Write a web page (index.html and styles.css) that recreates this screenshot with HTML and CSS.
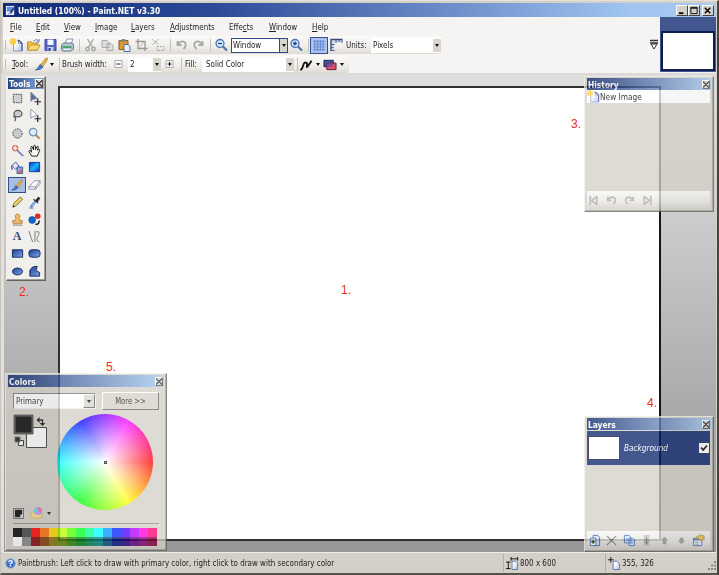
FILE: index.html
```html
<!DOCTYPE html>
<html lang="en">
<head>
<meta charset="utf-8">
<title>Untitled (100%) - Paint.NET v3.30</title>
<link rel="stylesheet" href="styles.css">
</head>
<body>
<svg class="defs" aria-hidden="true">
  <defs>
    <linearGradient id="blue" x1="0" y1="0" x2="1" y2="1"><stop offset="0" stop-color="#1c3f91"/><stop offset="1" stop-color="#7fa8e8"/></linearGradient>
    <linearGradient id="cy" x1="0" y1="0" x2="1" y2="1"><stop offset="0" stop-color="#0a2ed0"/><stop offset=".5" stop-color="#18b8f8"/><stop offset="1" stop-color="#0630c0"/></linearGradient>
    <linearGradient id="sheet" x1="0" y1="0" x2="1" y2="1"><stop offset=".3" stop-color="#fff"/><stop offset="1" stop-color="#a9c1ee"/></linearGradient>
  </defs>
  <symbol id="new" viewBox="0 0 14 14"><path d="M4 2.500h5l3 3v7.500H4z" fill="url(#sheet)"/><path d="M4 6v7h8.500M9 2.500v3h3" fill="none" stroke="#8c9cc6"/><path d="M8 2.500h1.500l3 3V13" fill="none" stroke="#3d5290" stroke-width="1.300"/><path d="M3.500 0v7M0 3.500h7M1 1l5 5M6 1L1 6" stroke="#f5b81c" stroke-width="1.300"/><circle cx="3.500" cy="3.500" r="2.200" fill="#ffd23c"/></symbol>
  <symbol id="open" viewBox="0 0 14 14"><path d="M1 12V4h4l1 1h5v7z" fill="#f3c34f" stroke="#b98b2e"/><path d="M1 12l3-5h9.500l-2.500 5z" fill="#ffdc78" stroke="#c59431"/><path d="M7 3q3-3 5 0M12.500 1v3H10" fill="none" stroke="#5c7fb8"/></symbol>
  <symbol id="save" viewBox="0 0 14 14"><path d="M1.500 1.500h11v11h-11z" fill="#5267c8" stroke="#3a48a6"/><path d="M4 1.500h6v5.500H4z" fill="#f1f5ff"/><path d="M4 9h6v4H4z" fill="#c6cee8"/><path d="M5 10h2v3H5z" fill="#29388e"/></symbol>
  <symbol id="print" viewBox="0 0 14 14"><path d="M4.500 6l2-5h6l-2 5z" fill="#fff" stroke="#8295b4"/><path d="M1 7l2-2h9l1 2v4l-2 2H2l-1-2z" fill="#b9c4d3" stroke="#6c7c93"/><path d="M2 8h9v2.500H2z" fill="#45a868"/><path d="M3 10.500h7V12H3z" fill="#eef"/></symbol>
  <symbol id="cut" viewBox="0 0 14 14"><g fill="none" stroke="#a5a5a5" stroke-width="1.400"><path d="M4 1l5 8M10 1L5 9"/><circle cx="4" cy="11" r="1.700"/><circle cx="10" cy="11" r="1.700"/></g></symbol>
  <symbol id="copyg" viewBox="0 0 14 14"><g fill="#dedede" stroke="#aaa"><path d="M1.500 2.500h5l2 2v5h-7zM6.500 5.500h4l2 2v5h-6z"/></g></symbol>
  <symbol id="copy" viewBox="0 0 14 14"><g fill="#d9e7ff" stroke="#3d6ab4"><path d="M1.500 1.500h5l2 2v6h-7zM6.500 4.500h4l2 2v6h-6z"/></g><path d="M3 5h3M3 7h3M8 8h3M8 10h3" stroke="#6f9ad8"/></symbol>
  <symbol id="paste" viewBox="0 0 14 14"><path d="M1.500 2.500h9v9h-9z" fill="#dc9a34" stroke="#8a5b1c"/><path d="M4 1h4v3H4z" fill="#888"/><path d="M6.500 6.500h4l2 2v5h-6z" fill="#eaf1ff" stroke="#5470a6"/></symbol>
  <symbol id="crop" viewBox="0 0 14 14"><path d="M3.500 1v9.500H13M1 3.500h9.500V13" fill="none" stroke="#999" stroke-width="1.300"/><path d="M4 10l6-6" stroke="#bbb"/></symbol>
  <symbol id="desel" viewBox="0 0 14 14"><path d="M1 1l6 6M7 1L1 7" stroke="#aaa"/><path d="M5.500 8.500h7v4h-7z" fill="none" stroke="#a5a5a5" stroke-dasharray="2 1"/></symbol>
  <symbol id="undo" viewBox="0 0 14 14"><path d="M3 3v4h4M3 7q3-5 7-3 3 3-1 7" fill="none" stroke="#aaa" stroke-width="1.800"/></symbol>
  <symbol id="redo" viewBox="0 0 14 14"><path d="M11 3v4H7M11 7Q8 2 4 4 1 7 5 11" fill="none" stroke="#aaa" stroke-width="1.800"/></symbol>
  <symbol id="zout" viewBox="0 0 14 14"><path d="M8 8l4.500 4.500" stroke="#55709e" stroke-width="2.200"/><circle cx="5.500" cy="5.500" r="4" fill="#d9eaff" stroke="#4a74b5" stroke-width="1.300"/><path d="M3.500 5.500h4" stroke="#223f86" stroke-width="1.300"/></symbol>
  <symbol id="zin" viewBox="0 0 14 14"><path d="M8 8l4.500 4.500" stroke="#55709e" stroke-width="2.200"/><circle cx="5.500" cy="5.500" r="4" fill="#d9eaff" stroke="#4a74b5" stroke-width="1.300"/><path d="M3.500 5.500h4M5.500 3.500v4" stroke="#223f86" stroke-width="1.300"/></symbol>
  <symbol id="mag" viewBox="0 0 14 14"><path d="M8 8l4.500 4.500" stroke="#c48a3a" stroke-width="2.200"/><circle cx="5.500" cy="5.500" r="4" fill="#d9eeff" stroke="#7090b8" stroke-width="1.300"/></symbol>
  <symbol id="gridi" viewBox="0 0 14 14"><path d="M2.500 1v12M5.500 1v12M8.500 1v12M11.500 1v12M1 2.500h12M1 5.500h12M1 8.500h12M1 11.500h12" stroke="#6588d0"/></symbol>
  <symbol id="ruler" viewBox="0 0 14 14"><path d="M1.500 13V1.500H13v3H4.500V13z" fill="#cfdcf4"/><path d="M1.500 13V1.500H13" fill="none" stroke="#3b4c70" stroke-width="1.400"/><path d="M6.500 2v3M9.500 2v2M12.500 2v3M2 6.500h3M2 9.500h2M2 12.500h3" fill="none" stroke="#48608e"/></symbol>
  <symbol id="brush" viewBox="0 0 14 14"><path d="M6 8L11 1.500l2-.5-.5 2.500L8 10z" fill="#f1b843" stroke="#a87420" stroke-width=".7"/><path d="M5.500 7.500l3 2.500q-2 3-7.500 3 3-1.500 4.500-5.500z" fill="#4c7ad4" stroke="#234792" stroke-width=".7"/></symbol>
  <symbol id="minus" viewBox="0 0 14 14"><path d="M3.500 3.500h7v7h-7z" fill="#fff" stroke="#aaa"/><path d="M5 7h4" stroke="#222"/></symbol>
  <symbol id="plus" viewBox="0 0 14 14"><path d="M3.500 3.500h7v7h-7z" fill="#fff" stroke="#aaa"/><path d="M5 7h4M7 5v4" stroke="#111"/></symbol>
  <symbol id="curve" viewBox="0 0 14 14"><path d="M1 13q2-1 3-5t3-3 1 4 5-6" fill="none" stroke="#111" stroke-width="2"/></symbol>
  <symbol id="blend" viewBox="0 0 14 14"><path d="M.5 2.500h10v7H.5z" fill="#3d58a8" stroke="#111a52"/><path d="M3.500 5.500h10v7h-10z" fill="#e0506a" stroke="#5d1735"/><path d="M4 6h6v3.500H4z" fill="#7551a0"/></symbol>
  <symbol id="rsel" viewBox="0 0 14 14"><path d="M2.500 2.500h9v9h-9z" fill="#d0d0d0" stroke="#333" stroke-dasharray="1.500 1"/></symbol>
  <symbol id="move" viewBox="0 0 14 14"><path d="M3 0v10l2.500-2L10 7z" fill="#5d6f93" stroke="#7c89a3" stroke-width=".8"/><path d="M10.500 7v7M7 10.500h7" stroke="#222" stroke-width="1.300"/></symbol>
  <symbol id="movesel" viewBox="0 0 14 14"><path d="M3 0v10l2.500-2L10 7z" fill="#fff" stroke="#8594b0"/><path d="M10.500 7v7M7 10.500h7" stroke="#222" stroke-width="1.300"/></symbol>
  <symbol id="lasso" viewBox="0 0 14 14"><ellipse cx="7.500" cy="5" rx="4.300" ry="3.500" fill="#ccc" stroke="#555" stroke-width="1.300"/><path d="M4 7q-2 1 0 2t0 4" fill="none" stroke="#555" stroke-width="1.300"/></symbol>
  <symbol id="esel" viewBox="0 0 14 14"><circle cx="7" cy="7" r="5" fill="#c9c9c9" stroke="#333" stroke-dasharray="1.500 1"/></symbol>
  <symbol id="wand" viewBox="0 0 14 14"><path d="M6 6l7 7" stroke="#7389c0" stroke-width="2"/><circle cx="4.500" cy="4.500" r="3" fill="#f3a08c" stroke="#cc5a50"/><path d="M4.500 2v5M2 4.500h5" stroke="#fff"/></symbol>
  <symbol id="hand" viewBox="0 0 14 14"><path d="M4 13L1 8q0-2 2-.5L4 9 3 4q0-2 1.500-1L6 6.500V2q1.500-1.500 2 0v4l1.500-3q2-1 1.500 1l-1 3 1.500-1.500q1.500 0 1 1.500l-2.500 6z" fill="#fff" stroke="#111"/></symbol>
  <symbol id="bucket" viewBox="0 0 14 14"><path d="M1 5l4-4 4 5-4 3z" fill="#dce7f7" stroke="#3d598e"/><path d="M1 5q-1 4 1 4" fill="none" stroke="#3560ba" stroke-width="1.500"/><path d="M6.500 6.500h6v7h-6z" fill="#8caae3" stroke="#395b9e"/><path d="M7 13l5-6v6z" fill="#e4635f"/></symbol>
  <symbol id="grad" viewBox="0 0 14 14"><path d="M1.500 1.500h11v10h-11z" fill="url(#cy)" stroke="#1432a0"/></symbol>
  <symbol id="eraser" viewBox="0 0 14 14"><path d="M1 9.500L7 3h6L8 9.500zM1 9.500V12h7V9.500M8 12l5-6V3" fill="#fff" stroke="#7e8ca6"/></symbol>
  <symbol id="pencil" viewBox="0 0 14 14"><path d="M2 12l1-4 7-7 2.500 2.500-7 7z" fill="#e7d16a" stroke="#826a27"/><path d="M2 12l.5-2 1.500 1.500z" fill="#111"/></symbol>
  <symbol id="picker" viewBox="0 0 14 14"><path d="M3 12l5-6" stroke="#4f80c8" stroke-width="2.600"/><path d="M4 11l4-5" stroke="#cfe4ff"/><path d="M1 13h5" stroke="#4f80c8"/><path d="M6 3.500l5 4M8.500 5l2.500-3.500 1.500 1L10 6z" fill="#222a3c" stroke="#222a3c" stroke-width="1.200"/></symbol>
  <symbol id="stamp" viewBox="0 0 14 14"><path d="M5.500 6Q3 2 7 1q4 1 1.500 5l1 2H12v3H2V8h2.500z" fill="#f0bd68" stroke="#b07c38"/><path d="M2 13h10" stroke="#8b7350"/></symbol>
  <symbol id="recolor" viewBox="0 0 14 14"><circle cx="4.500" cy="7.500" r="3.700" fill="#1765d2" stroke="#123f8c" stroke-width=".6"/><circle cx="10.500" cy="3.500" r="3" fill="#e12a21"/><path d="M8 12q4 1 4-4" fill="none" stroke="#111" stroke-width="1.500"/></symbol>
  <symbol id="lines" viewBox="0 0 14 14"><path d="M1 1l4 12M7.500 1v12M9 2q5-1 2 4t1 7" fill="none" stroke="#777"/></symbol>
  <symbol id="rect" viewBox="0 0 14 14"><path d="M1.500 3h11v8h-11z" fill="url(#blue)" stroke="#13285d"/></symbol>
  <symbol id="rrect" viewBox="0 0 14 14"><rect x="1" y="3" width="12" height="8" rx="3" fill="url(#blue)" stroke="#13285d"/></symbol>
  <symbol id="ell" viewBox="0 0 14 14"><ellipse cx="7" cy="7" rx="5.500" ry="3.700" fill="url(#blue)" stroke="#13285d"/></symbol>
  <symbol id="free" viewBox="0 0 14 14"><path d="M2 12V6q2-5 8-4.500L8.500 6l4 2v4z" fill="url(#blue)" stroke="#13285d"/></symbol>
  <symbol id="first" viewBox="0 0 14 14"><path d="M3.500 2v10M10.500 2v10M10 3L5 7l5 4" fill="none" stroke="#aaa" stroke-width="1.800"/></symbol>
  <symbol id="last" viewBox="0 0 14 14"><path d="M10.500 2v10M3.500 2v10M4 3l5 4-5 4" fill="none" stroke="#aaa" stroke-width="1.800"/></symbol>
  <symbol id="addl" viewBox="0 0 14 14"><path d="M5.500 1.500h5l2 2v9h-7z" fill="#cfdff8" stroke="#315b9e"/><path d="M2.500 4.500h6v8h-6z" fill="#fff" stroke="#315b9e"/><path d="M3.500 8.500h4M5.500 6.500v4" stroke="#111" stroke-width="1.300"/></symbol>
  <symbol id="del" viewBox="0 0 14 14"><path d="M2 2l10 10M12 2L2 12" stroke="#777" stroke-width="1.300"/></symbol>
  <symbol id="merge" viewBox="0 0 14 14"><path d="M4 1h6v12H4z" fill="#c2c2c2"/><path d="M7 3v7M5 8l2 3 2-3" stroke="#777" fill="none"/></symbol>
  <symbol id="up" viewBox="0 0 14 14"><path d="M7 3l4 4H9v4H5V7H3z" fill="#999"/></symbol>
  <symbol id="down" viewBox="0 0 14 14"><path d="M7 11l4-4H9V4H5v3H3z" fill="#999"/></symbol>
  <symbol id="prop" viewBox="0 0 14 14"><path d="M1.500 4.500h9v8h-9z" fill="#f0f5ff" stroke="#4a6594"/><path d="M2 5h8v2H2z" fill="#5678b9"/><path d="M5 3l4-2 4 1v4l-3 1-4-2z" fill="#efc24b" stroke="#9a7526" stroke-width=".7"/><path d="M3 9h5M3 11h5" stroke="#8b9db8"/></symbol>
  <symbol id="size" viewBox="0 0 14 14"><path d="M6.500 4.500h4l2 2v7h-6z" fill="url(#sheet)" stroke="#6175a2"/><path d="M5 2h8M5.500 0v4M12.500 0v4M2.500 5v8M0 5.500h5M0 12.500h5" stroke="#111"/></symbol>
  <symbol id="pos" viewBox="0 0 14 14"><path d="M5.500 4.500h4l3 3v6h-7z" fill="url(#sheet)" stroke="#6175a2"/><path d="M3 0v6M0 3h6" stroke="#111"/></symbol>
</svg>

<div class="window">
  <header class="titlebar">
    <svg class="appicon" viewBox="0 0 12 12"><path d="M1 1h9v10H1z" fill="#e8effc"/><path d="M2 2h7v5H2z" fill="#5d8fdb"/><path d="M5 8l5-6 1 1-4 6z" fill="#20356e"/><path d="M3 9h5v1H3z" fill="#8293b5"/></svg>
    <h1><span>Untitled (100%) - Paint.NET v3.30</span></h1>
    <div class="winbtns">
      <b><svg viewBox="0 0 11 10"><path d="M2 8h5" stroke="#000" stroke-width="2"/></svg></b><b><svg viewBox="0 0 11 10"><path d="M2 1.500h7v7H2zM2 2.500h7" fill="none" stroke="#000"/></svg></b><b class="x"><svg viewBox="0 0 11 10"><path d="M2 2l6 6M8 2L2 8" stroke="#000" stroke-width="1.600"/></svg></b>
    </div>
  </header>

  <div class="top">
    <div class="bars">
      <nav class="menu">
        <span class="m1"><u>F</u>ile</span><span class="m2"><u>E</u>dit</span><span class="m3"><u>V</u>iew</span><span class="m4"><u>I</u>mage</span><span class="m5"><u>L</u>ayers</span><span class="m6"><u>A</u>djustments</span><span class="m7">Effe<u>c</u>ts</span><span class="m8"><u>W</u>indow</span><span class="m9"><u>H</u>elp</span>
      </nav>
      <div class="bar main">
        <i class="grip"></i>
        <svg class="ic"><use href="#new"/></svg><svg class="ic"><use href="#open"/></svg><svg class="ic"><use href="#save"/></svg><svg class="ic"><use href="#print"/></svg>
        <i class="sep"></i>
        <svg class="ic"><use href="#cut"/></svg><svg class="ic"><use href="#copyg"/></svg><svg class="ic"><use href="#paste"/></svg><svg class="ic"><use href="#crop"/></svg><svg class="ic"><use href="#desel"/></svg>
        <i class="sep"></i>
        <svg class="ic"><use href="#undo"/></svg><svg class="ic"><use href="#redo"/></svg>
        <i class="sep"></i>
        <svg class="ic"><use href="#zout"/></svg>
        <div class="combo zoom"><span>Window</span><i class="drop"></i></div>
        <svg class="ic"><use href="#zin"/></svg>
        <i class="sep tight"></i>
        <svg class="ic on"><use href="#gridi"/></svg><svg class="ic"><use href="#ruler"/></svg>
        <span class="units">Units:</span>
        <div class="combo pixels"><span>Pixels</span><i class="drop"></i></div>
      </div>
      <div class="bar tool">
        <i class="grip"></i>
        <span class="lt"><u>T</u>ool:</span><svg class="ic"><use href="#brush"/></svg><i class="arrow near"></i>
        <i class="sep"></i>
        <span class="lb">Brush width:</span><svg class="ic"><use href="#minus"/></svg>
        <div class="combo width"><span>2</span><i class="drop"></i></div>
        <svg class="ic"><use href="#plus"/></svg>
        <i class="sep"></i>
        <span class="lf">Fill:</span>
        <div class="combo fill"><span>Solid Color</span><i class="drop"></i></div>
        <i class="sep"></i>
        <div class="modes"><svg><use href="#curve"/></svg><i class="arrow"></i><svg><use href="#blend"/></svg><i class="arrow"></i></div>
      </div>
    </div>
    <svg class="overflow" viewBox="0 0 8 12"><path d="M0 1.500h8M0 4h8" stroke="#333" stroke-width="1.500"/><path d="M1 5h6L4 10z" fill="#fff" stroke="#333"/></svg>
    <div class="thumb"><div></div></div>
  </div>

  <main class="work">
    <div class="canvas"></div>
    <b class="mark k1">1.</b><b class="mark k2">2.</b><b class="mark k3">3.</b><b class="mark k4">4.</b><b class="mark k5">5.</b>

    <section class="panel tools">
      <h2><span>Tools</span><i class="close"></i></h2>
      <div class="toolgrid">
        <svg><use href="#rsel"/></svg><svg><use href="#move"/></svg>
        <svg><use href="#lasso"/></svg><svg><use href="#movesel"/></svg>
        <svg><use href="#esel"/></svg><svg><use href="#mag"/></svg>
        <svg><use href="#wand"/></svg><svg><use href="#hand"/></svg>
        <svg><use href="#bucket"/></svg><svg><use href="#grad"/></svg>
        <svg class="active"><use href="#brush"/></svg><svg><use href="#eraser"/></svg>
        <svg><use href="#pencil"/></svg><svg><use href="#picker"/></svg>
        <svg><use href="#stamp"/></svg><svg><use href="#recolor"/></svg>
        <em>A</em><svg><use href="#lines"/></svg>
        <svg><use href="#rect"/></svg><svg><use href="#rrect"/></svg>
        <svg><use href="#ell"/></svg><svg><use href="#free"/></svg>
      </div>
    </section>

    <section class="panel glass history">
      <h2><span>History</span><i class="close"></i></h2>
      <div class="entry"><svg><use href="#new"/></svg><span>New Image</span></div>
      <div class="foot"><svg><use href="#first"/></svg><svg><use href="#undo"/></svg><svg><use href="#redo"/></svg><svg><use href="#last"/></svg></div>
    </section>

    <section class="panel glass colors">
      <h2><span>Colors</span><i class="close"></i></h2>
      <div class="pick"><div class="select"><span>Primary</span><i class="drop"></i></div><div class="more"><span>More &gt;&gt;</span></div></div>
      <div class="mix">
        <div class="side">
          <svg class="swatch" viewBox="0 0 36 36"><path d="M13.500 13.500h20v20h-20z" fill="#fff" stroke="#333"/><path d="M1 1h19v19H1z" fill="#000" stroke="#555"/><path d="M2 2h17v17H2z" fill="none" stroke="#999" stroke-width=".6"/><path d="M25 6h4.500v4" fill="none" stroke="#111" stroke-width="1.300"/><path d="M23.500 6l3-3v6zM26.500 9h6l-3 3z" fill="#111"/><path d="M5.500 26.500h5v5h-5z" fill="#fff" stroke="#222"/><path d="M2 23h5v5H2z" fill="#111" stroke="#666"/></svg>
          <div class="mini"><svg viewBox="0 0 12 12"><path d="M.5.5h11v11H.5z" fill="#ddd" stroke="#555"/><path d="M2 2h8v5H8v3H2z" fill="#000"/></svg><svg class="pal" viewBox="0 0 14 14"><path d="M1 12V6h5v1h6v5z" fill="#f9da8c" stroke="#e0b062"/><circle cx="8" cy="5" r="4" fill="#b39af4"/><path d="M8 5V1a4 4 0 0 1 3.500 6z" fill="#f26fa0"/><path d="M8 5l-3.500 2A4 4 0 0 1 8 1z" fill="#60d3ee"/></svg><i class="arrow"></i></div>
        </div>
        <div class="wheel"><i></i></div>
      </div>
      <div class="palette">
        <i class="c0"></i><i class="c1"></i><i class="c2"></i><i class="c3"></i><i class="c4"></i><i class="c5"></i><i class="c6"></i><i class="c7"></i><i class="c8"></i><i class="c9"></i><i class="c10"></i><i class="c11"></i><i class="c12"></i><i class="c13"></i><i class="c14"></i><i class="c15"></i>
        <i class="d0"></i><i class="d1"></i><i class="c2 dk"></i><i class="c3 dk"></i><i class="c4 dk"></i><i class="c5 dk"></i><i class="c6 dk"></i><i class="c7 dk"></i><i class="c8 dk"></i><i class="c9 dk"></i><i class="c10 dk"></i><i class="c11 dk"></i><i class="c12 dk"></i><i class="c13 dk"></i><i class="c14 dk"></i><i class="c15 dk"></i>
      </div>
    </section>

    <section class="panel glass layers">
      <h2><span>Layers</span><i class="close"></i></h2>
      <div class="layer"><div class="pic"></div><span>Background</span><svg viewBox="0 0 10 10"><path d="M0 0h10v10H0z" fill="#fff"/><path d="M2 4.500l2.200 2.500L8 2.500" fill="none" stroke="#000" stroke-width="1.700"/></svg></div>
      <div class="foot"><svg><use href="#addl"/></svg><svg><use href="#del"/></svg><svg><use href="#copy"/></svg><svg><use href="#merge"/></svg><svg><use href="#up"/></svg><svg><use href="#down"/></svg><svg><use href="#prop"/></svg></div>
    </section>
  </main>

  <footer class="status">
    <svg class="help" viewBox="0 0 12 12"><circle cx="6" cy="6" r="5" fill="#3e70d0" stroke="#6f95dc"/><path d="M4 4.500Q4.200 2.800 6 2.800q2 0 2 1.500Q8 5.500 6 6.200V7M6 8v1.400" fill="none" stroke="#fff" stroke-width="1.400"/></svg>
    <span class="hint">Paintbrush: Left click to draw with primary color, right click to draw with secondary color</span>
    <div class="cell dim"><svg><use href="#size"/></svg><span>800 x 600</span></div>
    <div class="cell xy"><svg><use href="#pos"/></svg><span>355, 326</span></div>
    <svg class="resize" viewBox="0 0 10 10"><path d="M8 1h2M5 4.500h2M8 4.500h2M2 8h2M5 8h2M8 8h2" stroke="#8c8981" stroke-width="2"/></svg>
  </footer>
</div>
</body>
</html>
```
FILE: styles.css
```css
* { box-sizing: border-box; }
body { margin: 0; font: 9.5px/12px "DejaVu Sans Condensed", "DejaVu Sans", sans-serif; font-stretch: condensed; color: #222; overflow: hidden; }
.defs { position: absolute; width: 0; height: 0; }
svg { display: block; flex: none; }
i { font-style: normal; }
span { display: block; white-space: nowrap; transform: scaleX(.835); transform-origin: left; }
u { text-underline-offset: 1px; text-decoration-thickness: 1px; }
.window { width: 719px; height: 575px; background: #d4d0c8; display: flex; flex-direction: column; border-left: 1px solid #c6c3bc; border-right: 2px solid #45443f; border-bottom: 2px solid #55534e; border-top: 1px solid #e4e2dc; padding: 2px 1px 0 2px; }

.titlebar { height: 14px; flex: none; display: flex; align-items: center; padding-left: 2px; background: linear-gradient(90deg, #102a78, #2c4c98 30%, #6e91cc 64%, #9fc5f0 88%, #a6caf0); }
.appicon { width: 11px; height: 11px; }
h1 { margin: 0 auto 0 2px; font-size: 9.5px; color: #fff; line-height: 13px; }
h1 span { transform: scaleX(.877); }
.winbtns { display: flex; padding-right: 2px; }
.winbtns b { width: 12px; height: 11px; background: #d4d0c8; border: 1px solid; border-color: #fff #444 #444 #fff; }
.winbtns svg { width: 10px; height: 9px; }
.winbtns .x { margin-left: 2px; }

.top { height: 56px; flex: none; display: flex; background: #f5f4f2; }
.bars { width: 646px; }
.menu { height: 19px; display: flex; align-items: center; padding-left: 7px; }
.m1 { width: 26px; } .m2 { width: 28px; } .m3 { width: 31px; } .m4 { width: 36px; } .m5 { width: 39px; }
.m6 { width: 59px; } .m7 { width: 40px; } .m8 { width: 43px; }
.bar { height: 18px; display: flex; align-items: center; background: linear-gradient(#fbfaf9, #f0eeea 60%, #dedbd3); border-radius: 0 2px 2px 0; }
.main { width: 438px; margin-bottom: 1px; }
.tool { width: 346px; }
.grip { width: 5px; height: 10px; border-left: 1px solid #c2bfb8; margin-left: 2px; flex: none; }
.main .grip { width: 3px; }
.sep { flex: none; width: 6px; height: 13px; background: linear-gradient(#c4c1ba, #c4c1ba) 3px 0 / 1px 100% no-repeat; }
.sep.tight { width: 5px; }
.ic { width: 17px; height: 14px; }
.ic.on { width: 18px; height: 17px; background: #aec4ee; border: 1px solid #31508f; padding: 1px; }
.combo { height: 15px; background: #fff; display: flex; align-items: center; justify-content: space-between; padding-left: 2px; flex: none; }
.drop { width: 8px; height: 13px; background: #d8d5cd; display: flex; align-items: center; justify-content: center; flex: none; }
.drop::after, .arrow::after { content: ""; border: 2.5px solid transparent; border-top: 3px solid #111; border-bottom: 0; }
.arrow { width: 7px; display: flex; justify-content: center; flex: none; }
.zoom { width: 57px; border: 1px solid #2f4b8d; margin-left: 1px; padding-left: 1px; }
.zoom .drop { border-left: 1px solid #2f4b8d; }
.units { width: 25px; margin-left: 1px; }
.pixels { width: 70px; }
.lt { width: 21px; margin-left: 2px; }
.near { margin-left: -2px; margin-right: 1px; }
.lb { width: 48px; }
.width { width: 33px; margin-left: 1px; }
.lf { width: 17px; margin-left: 1px; }
.fill { width: 92px; padding-left: 4px; margin-left: 0; }
.modes { display: flex; align-items: center; margin-left: -1px; }
.modes svg { width: 14px; height: 13px; }
.modes .arrow { width: 10px; }
.overflow { width: 8px; height: 12px; margin: 22px 2px 0 1px; }
.thumb { width: 56px; height: 55px; background: #42578f; padding: 14px 1px 1px; margin-left: auto; }
.thumb div { height: 40px; border: 2px solid #101d50; background: #fff; }

.work { position: relative; flex: 1; margin-left: -2px; background: linear-gradient(#dedede, #d0d0d0 25%, #aaa 70%, #979797); border-left: 3px solid #e3e0da; border-top: 2px solid #dddbd7; }
.canvas { position: absolute; left: 54px; top: 11px; width: 603px; height: 455px; background: #fff; border: 2px solid #303030; border-right-color: #151515; }
.mark { position: absolute; font: 12px "Liberation Sans", sans-serif; color: #f02b25; }
.k1 { left: 337px; top: 208px; } .k2 { left: 15px; top: 210px; } .k3 { left: 567px; top: 42px; } .k4 { left: 643px; top: 321px; } .k5 { left: 102px; top: 285px; }

.panel { position: absolute; background: #d4d0c8; border: 1px solid; border-color: #efeeea #65635e #65635e #efeeea; padding: 1px 2px; display: flex; flex-direction: column; box-shadow: inset -1px -1px #a19e97; }
.glass { opacity: .76; }
h2 { margin: 0; height: 12px; flex: none; display: flex; justify-content: space-between; align-items: center; font-size: 9.5px; line-height: 11px; color: #fff; padding: 0 1px; background: linear-gradient(90deg, #0a246a, #a6caf0); }
h2 span { transform: scaleX(.88); }
.close { width: 8px; height: 9px; background: linear-gradient(45deg, transparent 45%, #444 45% 55%, transparent 55%), linear-gradient(-45deg, transparent 45%, #444 45% 55%, transparent 55%), #d4d0c8; border: 1px solid; border-color: #fff #555 #555 #fff; }
.tools { left: 2px; top: 1px; width: 40px; height: 205px; background: #f1efeb; padding: 1px; }
.tools h2 { background: linear-gradient(90deg, #224080, #8daedb); height: 11px; }
.toolgrid { display: grid; grid-template-columns: 18px 17px; grid-auto-rows: 17.250px; justify-items: center; align-items: center; padding: 1px 1px 0 0; }
.toolgrid svg { width: 13px; height: 13px; }
.toolgrid .active { width: 18px; height: 16px; background: #a9bce2; border: 1px solid #34508c; padding: 1px; }
.toolgrid em { font: bold 12px "Liberation Serif", serif; color: #304f86; }

.history { left: 580px; top: 1px; width: 130px; height: 136px; }
.entry { height: 13px; background: #fff; display: flex; align-items: center; margin-right: 1px; color: #000; }
.entry svg { width: 13px; height: 13px; }
.entry span { transform: scaleX(.87); }
.foot { margin: auto 1px 1px 0; height: 18px; display: flex; align-items: center; gap: 4.400px; padding-left: 1px; background: linear-gradient(#f8f7f5, #e8e6e1 60%, #d0cdc5); }
.foot svg { width: 13px; height: 13px; }
.history .foot { gap: 5px; padding-left: 0; }

.colors { left: 1px; top: 298px; width: 162px; height: 178px; }
.pick { display: flex; padding: 5px 5px 0; justify-content: space-between; height: 23px; }
.select { width: 83px; height: 16px; margin-top: 1px; background: #fff; border: 1px solid; border-color: #777 #eee #eee #777; display: flex; align-items: center; justify-content: space-between; padding-left: 2px; }
.select .drop { width: 12px; height: 14px; border: 1px solid; border-color: #fff #666 #666 #fff; }
.more { width: 57px; height: 18px; border: 1px solid; border-color: #fff #666 #666 #fff; text-align: center; line-height: 16px; }
.more span { transform: scaleX(.8); transform-origin: center; }
.mix { display: flex; padding: 4px 5px 0; height: 101px; }
.side { width: 44px; display: flex; flex-direction: column; justify-content: space-between; }
.swatch { width: 36px; height: 36px; }
.mini { display: flex; align-items: center; margin-bottom: -9px; }
.mini svg { width: 11px; height: 11px; }
.mini .pal { width: 14px; height: 14px; margin: 0 1px 0 6px; }
.wheel { width: 96px; height: 96px; border-radius: 50%; background: radial-gradient(closest-side, #fff, transparent), conic-gradient(from 90deg, red, yellow, lime, cyan, blue, magenta, red); display: flex; align-items: center; justify-content: center; }
.wheel i { width: 3px; height: 3px; border: 1px solid #111; background: #fff; }
.palette { margin: auto 5px 3px; border-top: 1px solid #8d8b86; padding-top: 4px; display: grid; grid-template-columns: repeat(16, 9px); grid-auto-rows: 9px; }
.c0 { background: #000; } .c1 { background: #404040; } .c2 { background: #f00; } .c3 { background: #ff6a00; } .c4 { background: #ffd800; } .c5 { background: #b6ff00; } .c6 { background: #4cff00; } .c7 { background: #00ff21; } .c8 { background: #00ff90; } .c9 { background: #0ff; } .c10 { background: #0094ff; } .c11 { background: #0026ff; } .c12 { background: #4800ff; } .c13 { background: #b200ff; } .c14 { background: #ff00dc; } .c15 { background: #ff006e; }
.d0 { background: #fff; } .d1 { background: #808080; }
.dk { filter: brightness(.5); }

.layers { left: 580px; top: 341px; width: 130px; height: 136px; }
.layer { height: 34px; margin: 1px 1px 0 0; background: #0a246a; color: #fff; display: flex; align-items: center; padding: 0 1px 0 1px; font-style: italic; }
.layer span { transform: scaleX(.86); }
.pic { width: 32px; height: 24px; background: #fff; border: 1px solid #101c44; margin-right: 4px; }
.layer svg { width: 10px; height: 10px; margin-left: auto; }

.status { height: 21px; flex: none; display: flex; align-items: center; border-top: 1px solid #eeece7; padding-left: 2px; }
.help { width: 11px; height: 11px; margin-right: 2px; }
.hint { width: 485px; }
.cell { display: flex; align-items: center; height: 18px; border-left: 1px solid #b2aea6; padding-left: 2px; }
.cell svg { width: 13px; height: 13px; margin-right: 1px; }
.dim { width: 102px; }
.xy { width: 98px; }
.resize { width: 10px; height: 10px; margin: 5px 0 0 auto; }
```
